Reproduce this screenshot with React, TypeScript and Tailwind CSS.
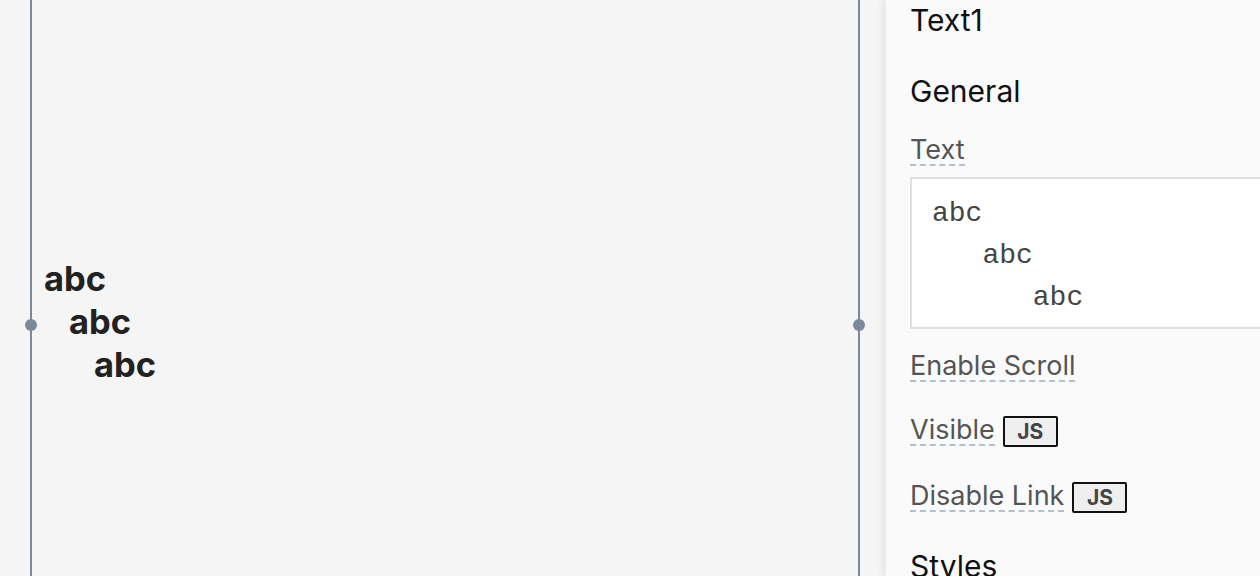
import type { ReactNode } from 'react'

function Label({ children }: { children: ReactNode }) {
  return (
    <span className="inline-block h-[30px] text-[27px] leading-[28px] text-[#555] border-b-2 border-dashed border-[#b3bfcc]">
      {children}
    </span>
  )
}

function JsBadge() {
  return (
    <span className="ml-2 flex h-[31px] w-[55px] items-center justify-center rounded-[2px] border-2 border-[#111] bg-[#efefef] text-[21px] font-bold text-[#444]">
      JS
    </span>
  )
}

export default function App() {
  return (
    <div className="flex h-[576px] w-[1260px] overflow-hidden bg-[#f5f5f5] font-['Inter',sans-serif]">
      {/* Canvas */}
      <div className="w-[886px] shrink-0 pl-[30px]">
        <div className="relative h-full w-[830px] border-x-2 border-[#7b8a9b]">
          <div className="absolute left-[-7px] top-[319px] h-[12px] w-[12px] rounded-full bg-[#7b8a9b]" />
          <div className="absolute right-[-7px] top-[319px] h-[12px] w-[12px] rounded-full bg-[#7b8a9b]" />
          <div className="pt-[257px] pl-[12px] text-[34.5px] font-bold leading-[43px] text-[#222]">
            <div>abc</div>
            <div className="pl-[25px]">abc</div>
            <div className="pl-[50px]">abc</div>
          </div>
        </div>
      </div>

      {/* Inspector */}
      <div className="flex-1 bg-[#fafafa] pl-[24px] shadow-[-3px_0_8px_rgba(0,0,0,0.07)]">
        <div className="mt-[2px] text-[30px] leading-[36px] text-[#111]">Text1</div>
        <div className="mt-[35px] text-[30px] leading-[36px] text-[#111]">General</div>

        <div className="mt-[27px]">
          <Label>Text</Label>
        </div>
        <div className="mt-[11px] h-[152px] border-2 border-r-0 border-[#e0e0e0] bg-white pl-[20px] pt-[14px] font-['Liberation_Mono',monospace] text-[28px] leading-[42px] text-[#444] whitespace-pre">
          {'abc\n   abc\n      abc'}
        </div>

        <div className="mt-[23px]">
          <Label>Enable Scroll</Label>
        </div>

        <div className="mt-[34px] flex items-start">
          <Label>Visible</Label>
          <JsBadge />
        </div>

        <div className="mt-[35px] flex items-start">
          <Label>Disable Link</Label>
          <JsBadge />
        </div>

        <div className="mt-[35px] text-[30px] leading-[36px] text-[#111]">Styles</div>
      </div>
    </div>
  )
}
